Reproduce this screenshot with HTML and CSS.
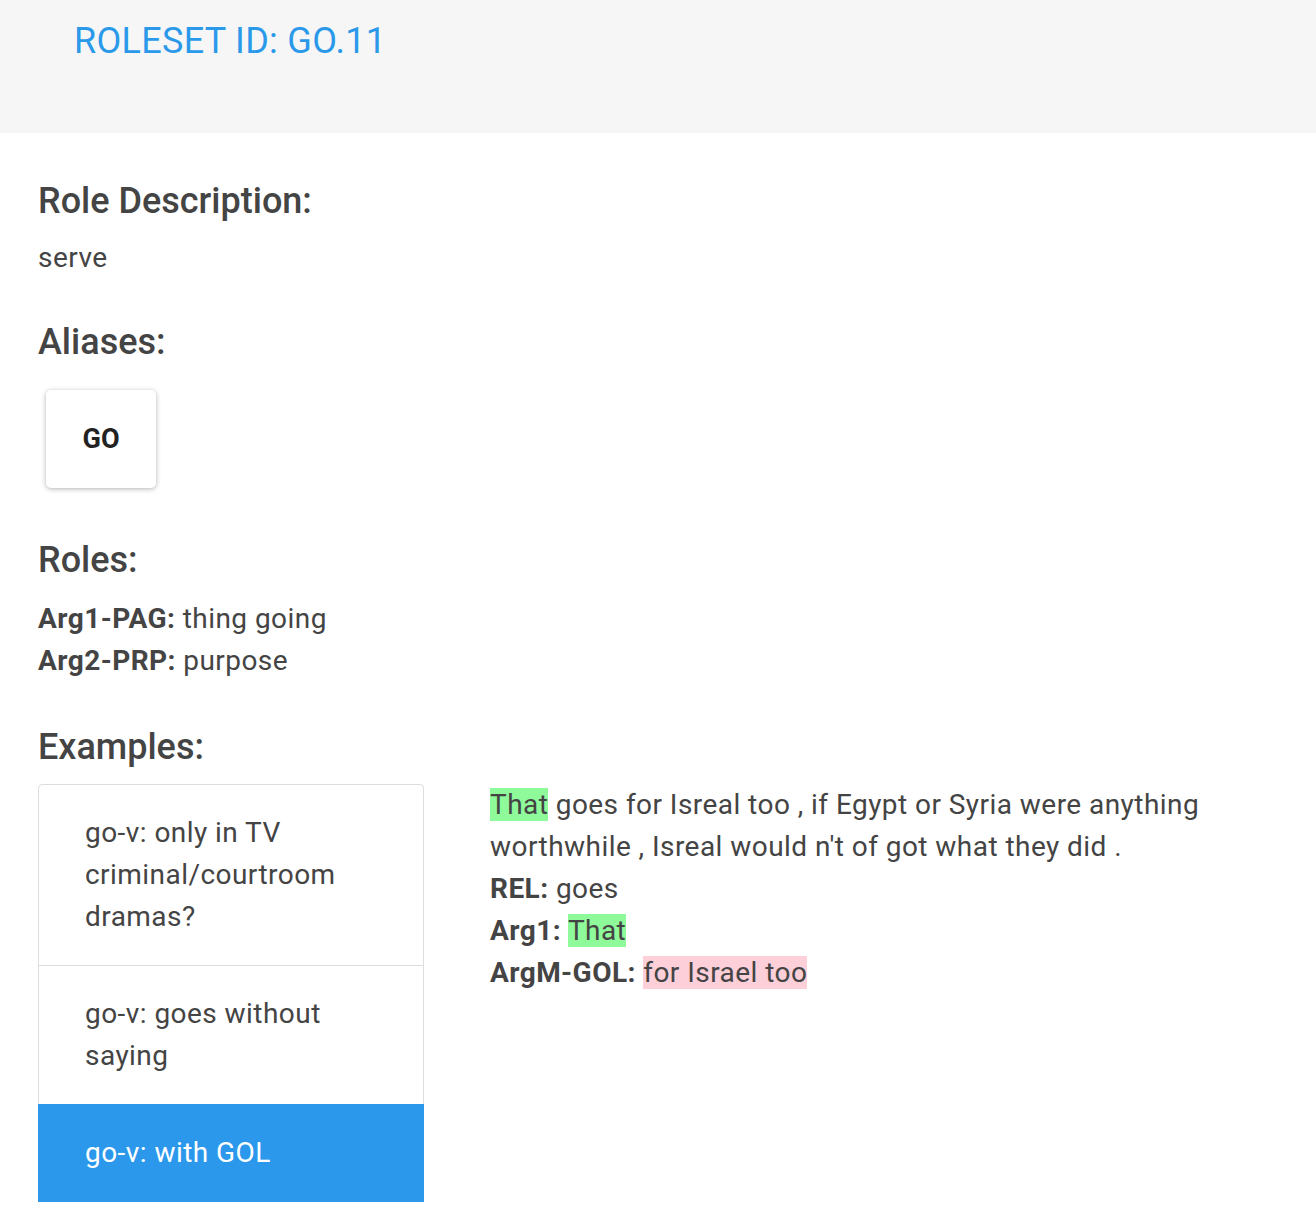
FILE: index.html
```html
<!DOCTYPE html>
<html>
<head>
<meta charset="utf-8">
<link rel="stylesheet" href="styles.css">
</head>
<body>
<header class="topbar">
  <h1 class="title">ROLESET ID: GO.11</h1>
</header>
<main class="content">
  <h2 class="heading first">Role Description:</h2>
  <p class="text desc">serve</p>

  <h2 class="heading aliases">Aliases:</h2>
  <div class="alias-list">
    <button class="alias">GO</button>
  </div>

  <h2 class="heading roles">Roles:</h2>
  <div class="text role-list">
    <div><b>Arg1-PAG:</b> thing going</div>
    <div><b>Arg2-PRP:</b> purpose</div>
  </div>

  <h2 class="heading examples">Examples:</h2>
  <div class="example-row">
    <ul class="example-list">
      <li class="example-item">go-v: only in TV criminal/courtroom dramas?</li>
      <li class="example-item">go-v: goes without saying</li>
      <li class="example-item active">go-v: with GOL</li>
    </ul>
    <div class="example-detail text">
      <div><span class="hl-green">That</span> goes for Isreal too , if Egypt or Syria were anything worthwhile , Isreal would n't of got what they did .</div>
      <div><b>REL:</b> goes</div>
      <div><b>Arg1:</b> <span class="hl-green">That</span></div>
      <div><b>ArgM-GOL:</b> <span class="hl-pink">for Israel too</span></div>
    </div>
  </div>
</main>
</body>
</html>
```

FILE: styles.css
```css
* { box-sizing: border-box; }
html, body { margin: 0; padding: 0; background: #fff; }
body {
  font-family: Roboto, "Noto Sans", Arial, sans-serif;
  color: #444;
}
.topbar {
  background: #f6f6f6;
  height: 133px;
  padding: 16px 0 0 74px;
}
.title {
  margin: 0;
  font-size: 36px;
  line-height: 50px;
  font-weight: 400;
  color: #2b99ea;
  letter-spacing: 0.3px;
}
.content {
  padding: 0 38px 40px 38px;
}
.heading {
  margin: 0;
  font-size: 36px;
  line-height: 40px;
  font-weight: 500;
  color: #444;
}
.heading.first { margin-top: 48px; }
.heading.aliases { margin-top: 43px; }
.heading.roles { margin-top: 52px; }
.heading.examples { margin-top: 45px; }
.text {
  font-size: 28px;
  line-height: 42px;
  letter-spacing: 0.45px;
  color: #444;
}
.text b { font-weight: 700; }
.desc { margin: 16px 0 0 0; }
.alias-list {
  margin-top: 28px;
  padding-left: 8px;
}
.alias {
  display: block;
  width: 110px;
  height: 98px;
  border: none;
  border-radius: 5px;
  background: #fff;
  box-shadow: 0 1px 5px rgba(0,0,0,0.3);
  font-family: Roboto, Arial, sans-serif;
  font-size: 27px;
  font-weight: 700;
  color: #222;
  padding: 0;
}
.role-list { margin-top: 18px; }
.example-row {
  margin-top: 17px;
  display: flex;
  gap: 66px;
  align-items: flex-start;
}
.example-list {
  list-style: none;
  margin: 0;
  padding: 0;
  width: 386px;
  flex: none;
}
.example-item {
  font-size: 28px;
  line-height: 42px;
  letter-spacing: 0.45px;
  color: #444;
  padding: 27px 46px;
  border: 1px solid #ddd;
  margin-bottom: -1px;
  background: #fff;
}
.example-item:first-child {
  border-radius: 4px 4px 0 0;
}
.example-item.active {
  background: #2b98ec;
  border-color: #2b98ec;
  color: #fff;
}
.example-detail {
  flex: 1;
  padding-right: 60px;
  margin-top: 0;
}
.hl-green { background: #8efa9a; }
.hl-pink { background: #fccfd9; }
```
